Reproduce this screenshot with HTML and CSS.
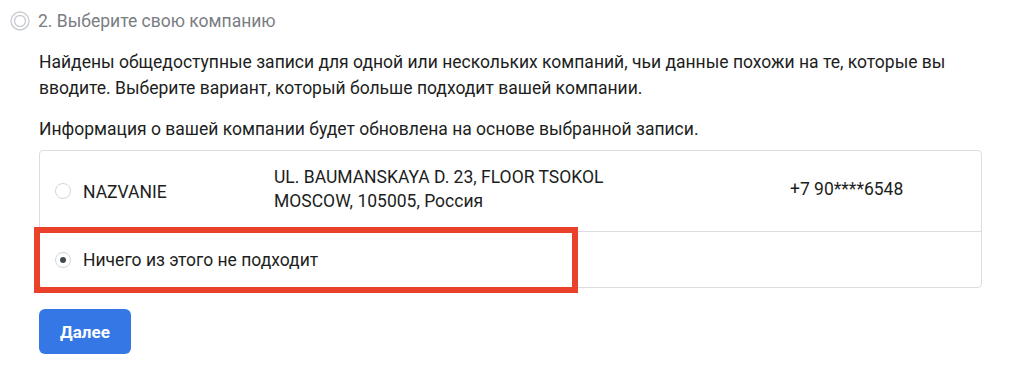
FILE: index.html
```html
<!DOCTYPE html>
<html lang="ru">
<head>
<meta charset="utf-8">
<link rel="stylesheet" href="styles.css">
</head>
<body>
<div class="page">
  <div class="step-head">
    <svg class="step-icon" width="20" height="20" viewBox="0 0 20 20">
      <circle cx="10" cy="10" r="9" fill="none" stroke="#c9ccd1" stroke-width="1.4"/>
      <circle cx="10" cy="10" r="5.5" fill="none" stroke="#c9ccd1" stroke-width="1.4"/>
    </svg>
    <span class="step-title">2. Выберите свою компанию</span>
  </div>
  <div class="content">
    <p class="intro">Найдены общедоступные записи для одной или нескольких компаний, чьи данные похожи на те, которые вы вводите. Выберите вариант, который больше подходит вашей компании.</p>
    <p class="note">Информация о вашей компании будет обновлена на основе выбранной записи.</p>
    <div class="options">
      <div class="option option-company">
        <span class="radio"></span>
        <span class="name">NAZVANIE</span>
        <span class="address">UL. BAUMANSKAYA D. 23, FLOOR TSOKOL<br>MOSCOW, 105005, Россия</span>
        <span class="phone">+7 90****6548</span>
      </div>
      <div class="option option-none">
        <span class="radio checked"></span>
        <span class="name">Ничего из этого не подходит</span>
        <div class="highlight"></div>
      </div>
    </div>
    <button class="next">Далее</button>
  </div>
</div>
</body>
</html>
```

FILE: styles.css
```css
* { box-sizing: border-box; }
html, body { margin: 0; padding: 0; background: #fff; }
body {
  font-family: Roboto, "Noto Sans", "Liberation Sans", sans-serif;
  color: #1c1e21;
  font-size: 17.5px;
}
.page { padding: 10px 42px 0 10px; }
.step-head {
  display: flex;
  align-items: center;
  height: 22px;
  gap: 8px;
}
.step-icon { display: block; flex: none; }
.step-title { color: #7a7d82; font-size: 17.5px; line-height: 22px; }
.content { padding-left: 29px; }
.intro { margin: 17px 0 0; line-height: 26px; }
.note { margin: 15px 0 0; line-height: 26px; }
.options {
  margin-top: 8px;
  border: 1px solid #dadde1;
  border-radius: 4px;
  width: 943px;
}
.option {
  position: relative;
  display: flex;
  align-items: center;
  padding-left: 15px;
}
.option-company { height: 81px; border-bottom: 1px solid #dadde1; }
.option-none { height: 55px; }
.radio {
  flex: none;
  width: 16px;
  height: 16px;
  border-radius: 50%;
  border: 1px solid #d3d5d9;
  background: #fff;
  margin-right: 12px;
  position: relative;
}
.radio.checked::after {
  content: "";
  position: absolute;
  left: 4px; top: 4px;
  width: 6px; height: 6px;
  border-radius: 50%;
  background: #444950;
}
.name { line-height: 24px; }
.option-company .name { width: 191px; flex: none; padding-top: 2px; }
.option-none .name { padding-top: 1px; }
.address { width: 516px; flex: none; line-height: 24px; margin-top: -4px; }
.phone { line-height: 24px; margin-top: -4px; }
.highlight {
  position: absolute;
  left: -6px;
  top: -5px;
  width: 544px;
  height: 66px;
  border: 6px solid #ea412b;
}
.next {
  margin-top: 21px;
  width: 92px;
  height: 45px;
  border: 0;
  border-radius: 6px;
  background: #3578e5;
  color: #fff;
  font-family: Roboto, "Noto Sans", "Liberation Sans", sans-serif;
  font-weight: 700;
  font-size: 17px;
  display: block;
}
```
